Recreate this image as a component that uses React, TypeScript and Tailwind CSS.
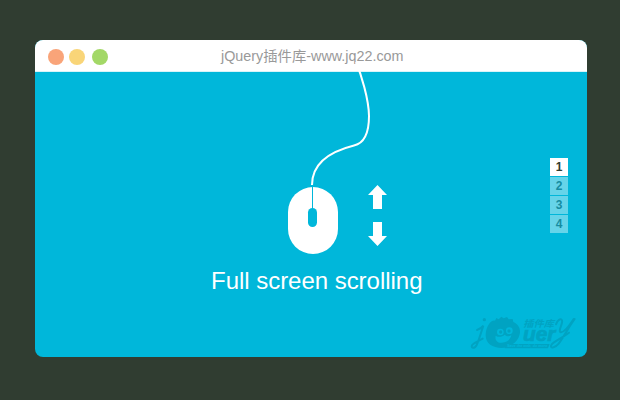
function MouseArt() {
  return (
    <svg className="absolute left-[245px] top-[20px]" width="120" height="200" viewBox="0 -6 120 200" fill="none">
      <path
        d="M76 -4C81 8 88.8 33 89 50C89 66 85 77 74 79.5C56 84 32 94 32 119"
        stroke="#fff"
        strokeWidth="2"
      />
      <rect x="8" y="121" width="50" height="67" rx="25" fill="#fff" />
      <path d="M32.5 120V143" stroke="#00b7da" strokeWidth="1" />
      <rect x="28" y="142" width="9" height="19" rx="4.5" fill="#00b7da" />
      <path d="M97.5 119L107 129H102V143H93V129H88Z" fill="#fff" />
      <path d="M97.5 180L107 170H102V156H93V170H88Z" fill="#fff" />
    </svg>
  );
}

function Watermark() {
  return (
    <svg className="absolute left-[430px] top-[270px]" width="120" height="43" viewBox="0 0 360 129" fill="#00a3c2">
      <path d="M36 60C43 58 50 54 55 47C48 69 41 92 35 105C29 117 17 115 21 106C25 99 40 94 53 86" fill="none" stroke="#00a3c2" strokeWidth="6" strokeLinecap="round" />
      <circle cx="58" cy="29" r="5" />
      <path
        fillRule="evenodd"
        d="M62 73C64 48 77 30 90 32L94 24L101 28L109 20L116 25L126 21L131 28L143 27L145 36C161 43 168 57 164 73C161 88 152 98 139 105L151 110L128 112C92 119 60 106 62 73ZM92 77C89 90 97 99 110 98C126 98 137 87 139 76C129 81 122 78 119 74C112 81 101 83 92 77Z"
      />
      <g fill="#00b7da">
        <circle cx="106" cy="66" r="10" />
        <circle cx="133" cy="62" r="10" />
      </g>
      <circle cx="107" cy="66" r="5" />
      <circle cx="132" cy="63" r="5" />
      <text x="175" y="52" textLength="92" lengthAdjust="spacingAndGlyphs" className="font-['Noto_Sans_CJK_SC',sans-serif] text-[28px] font-bold italic">
        插件库
      </text>
      <text x="174" y="94" textLength="97" lengthAdjust="spacingAndGlyphs" stroke="#00a3c2" strokeWidth="2" className="font-['Liberation_Sans',sans-serif] text-[58px] font-bold italic">
        uer
      </text>
      <path
        d="M273 43C277 31 287 23 291 31C295 39 277 65 288 67C300 67 316 42 326 27M329 27C311 52 296 81 281 101C270 115 253 116 259 105C264 95 290 85 312 68"
        fill="none"
        stroke="#00a3c2"
        strokeWidth="6"
        strokeLinecap="round"
      />
      <path d="M124 102H254L249 115H119Z" />
      <text x="126" y="112" textLength="121" lengthAdjust="spacingAndGlyphs" fill="#00b7da" className="font-['Liberation_Sans',sans-serif] text-[11px] font-bold italic">
        Save the web, do more
      </text>
    </svg>
  );
}

export default function App() {
  return (
    <main className="flex h-[400px] w-[620px] bg-[#303d31] pl-[35px] pt-10 font-['Liberation_Sans','Noto_Sans_CJK_SC',sans-serif]">
      <section className="relative h-[317px] w-[552px] overflow-hidden rounded-lg bg-[#00b7da]">
        <header className="flex h-8 items-center border-b border-[#d8f3f8] bg-white pl-[13px] pt-[3px]">
          <div className="flex w-[172px] items-center">
            <span className="size-4 rounded-full bg-[#f9a479]" />
            <span className="ml-[5px] size-4 rounded-full bg-[#f9d578]" />
            <span className="ml-[7px] size-4 rounded-full bg-[#a3d867]" />
          </div>
          <svg width="184" height="24" className="overflow-visible" fill="#999">
            <text x="1" y="16" textLength="182.5" lengthAdjust="spacingAndGlyphs" className="text-[14px]">
              jQuery插件库-www.jq22.com
            </text>
          </svg>
        </header>
        <MouseArt />
        <h1 className="ml-[176px] mt-[194px] whitespace-nowrap text-[24px] leading-[30px] tracking-[-0.03px] text-white">
          Full screen scrolling
        </h1>
        <nav className="absolute left-[515px] top-[118px] flex flex-col gap-px text-center text-xs font-bold leading-[19px]">
          <span className="h-[18px] w-[18px] bg-white text-[#303d31]">1</span>
          <span className="h-[18px] w-[18px] bg-[#66d4e9] text-[#168ca1]">2</span>
          <span className="h-[18px] w-[18px] bg-[#66d4e9] text-[#168ca1]">3</span>
          <span className="h-[18px] w-[18px] bg-[#66d4e9] text-[#168ca1]">4</span>
        </nav>
        <Watermark />
      </section>
    </main>
  );
}
